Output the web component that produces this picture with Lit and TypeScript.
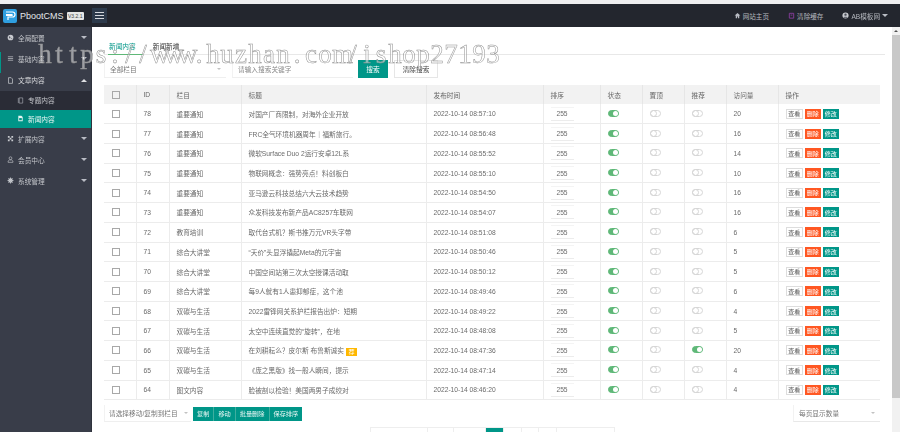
import { LitElement, html, css, svg } from "lit";
import { customElement } from "lit/decorators.js";

type Row = [number, string, string, string, number, boolean];

const rows: Row[] = [
  [78, "重要通知", "对国产厂商限制，对海外企业开放", "08:57:10", 20, false],
  [77, "重要通知", "FRC全气环境机器周年｜福斯旅行。", "08:56:48", 16, false],
  [76, "重要通知", "微软Surface Duo 2运行安卓12L系", "08:55:52", 14, false],
  [75, "重要通知", "物联网概念：强势亮点！料创板白", "08:55:10", 10, false],
  [74, "重要通知", "亚马逊云科技总结六大云技术趋势", "08:54:50", 16, false],
  [73, "重要通知", "众发科技发布新产品AC8257车联网", "08:54:07", 16, false],
  [72, "教育培训", "取代台式机？斯书推万元VR头字带", "08:51:08", 6, false],
  [71, "综合大讲堂", "“天价”头显浮撬起Meta的元宇宙", "08:50:46", 5, false],
  [70, "综合大讲堂", "中国空间站第三次太空授课活动取", "08:50:12", 5, false],
  [69, "综合大讲堂", "每9人就有1人患抑郁症，这个池", "08:49:46", 6, false],
  [68, "双碳与生活", "2022雷锋网关系护栏报告出炉：短期", "08:49:22", 4, false],
  [67, "双碳与生活", "太空中连续直觉的“旋转”，在地", "08:48:08", 5, false],
  [66, "双碳与生活", "在刘耕耘么？皮尔斯 布鲁斯诚实", "08:47:36", 20, true],
  [65, "双碳与生活", "《庞之黑版》找一般人瞬间，提示", "08:47:14", 4, false],
  [64, "图文内容", "脸被剖以检验！美国两男子成绞对", "08:46:20", 4, false],
];

const watermark = "https://www.huzhan.com/ishop27193";

const icon = (d: unknown) => html`<svg class="ic" viewBox="0 0 16 16">${d}</svg>`;
const icons = {
  globe: svg`<circle cx="8" cy="8" r="6.5" fill="#c9cbd0"/><path d="M4 5l3 1 1 3-2 1zM10 9l2 0-1 3z" fill="#393d49"/>`,
  list: svg`<path d="M2 4h12M2 8h12M2 12h12" stroke="#c9cbd0" stroke-width="1.5"/>`,
  doc: svg`<path d="M3.5 1.5h6l3 3v10h-9z" fill="none" stroke="#d8dadd" stroke-width="1.5"/>`,
  sub: svg`<path d="M3 2v12M5 2h8v12H5z" fill="none" stroke="#b8bbc2" stroke-width="1.3"/>`,
  news: svg`<path d="M3 1.5h7l3 3v10H3z" fill="#e6f5f2"/><path d="M5 7h6v5H5z" fill="#009688"/>`,
  ext: svg`<path d="M2 2h4v4H2zM10 2h4v4h-4zM2 10h4v4H2zM10 10h4v4h-4zM6 6h4v4H6z" fill="#c9cbd0"/>`,
  user: svg`<circle cx="8" cy="5" r="3.2" fill="none" stroke="#c9cbd0" stroke-width="1.4"/><path d="M2.5 14.5v-3l3-2.5h5l3 2.5v3z" fill="none" stroke="#c9cbd0" stroke-width="1.4"/>`,
  gear: svg`<circle cx="8" cy="8" r="5" fill="#c9cbd0"/><circle cx="8" cy="8" r="2" fill="#393d49"/><path d="M8 1v14M1 8h14M3 3l10 10M13 3L3 13" stroke="#c9cbd0" stroke-width="1.6"/>`,
  home: svg`<path d="M8 2L1.5 8H4v6h3v-4h2v4h3V8h2.500z" fill="#b9bcc4"/>`,
  trash: svg`<path d="M3 3h10v11H3z" fill="none" stroke="#8a3fa0" stroke-width="2"/><path d="M6 7h4" stroke="#8a3fa0" stroke-width="2"/>`,
  avatar: svg`<circle cx="8" cy="8" r="7" fill="#c9cbd0"/><circle cx="8" cy="6" r="2.700" fill="#4a4e5a"/><path d="M3 13c1-3 9-3 10 0z" fill="#4a4e5a"/>`,
};

@customElement("app-root")
export class AppRoot extends LitElement {
  static styles = css`
    :host { display: block; width: 900px; height: 432px; overflow: hidden; position: relative; background: #fff;
      font-family: "Liberation Sans", "Noto Sans CJK SC", sans-serif; font-size: 6.7px; color: #6a6a6a; }
    .frame { display: grid; grid-template-rows: 4px 23px 405px; width: 900px; height: 432px; filter: blur(0.4px); }
    .strip { background: #eeeef0; }
    .top { background: #23262e; display: flex; align-items: center; color: #c4c6cb; }
    .logo { display: flex; align-items: center; width: 92px; gap: 3px; padding-left: 3px; box-sizing: border-box; }
    .mark { width: 14px; height: 14px; border-radius: 2px; background: #2f9fe0; display: block; flex: none; }
    .brand { font-size: 9px; color: #e4e6ea; white-space: nowrap; }
    .ver { font-size: 5px; background: #e6e6e6; color: #444; padding: 1px 1.500px; border-radius: 1px; white-space: nowrap; }
    .burger { width: 15px; height: 15px; background: #2d3a4b; display: flex; align-items: center; justify-content: center; }
    .burger svg { width: 9px; height: 9px; display: block; }
    .links { margin-left: auto; display: flex; align-items: center; gap: 19px; padding-right: 12px; font-size: 6.600px; }
    .link { display: flex; align-items: center; gap: 2px; white-space: nowrap; color: #b5b8bf; }
    .ic { width: 7px; height: 7px; flex: none; display: block; }
    .caret { width: 0; height: 0; border: 3px solid transparent; border-top-color: #b9bcc4; border-bottom-width: 0; }
    .body { display: grid; grid-template-columns: 92px 800px 8px; min-height: 0; }
    .side { background: #393d49; color: #c2c4c9; border-right: 1px solid #2f323c; box-sizing: border-box; position: relative; }
    .mark-bar { position: absolute; left: 0; top: 25px; width: 1px; height: 21px; background: #009688; }
    .item { height: 21px; display: flex; align-items: center; padding: 0 4px 0 7px; gap: 4px; }
    .item .name { flex: 1; }
    .item .up { border-top-width: 0; border-top-color: transparent; border-bottom: 3px solid #dfe0e3; }
    .item.open { height: 22px; color: #dcdde0; }
    .sub { height: 18.500px; display: flex; align-items: center; gap: 4px; padding-left: 17px; background: #2a2c36; }
    .sub.on { background: #009688; color: #e8f6f4; }
    .main { padding: 0 12px; overflow: hidden; min-width: 0; position: relative; }
    .tabs { height: 28px; border-bottom: 1px solid #e8e8e8; margin-right: -5px; box-sizing: border-box; display: flex; align-items: flex-end; gap: 5px; }
    .tab { height: 13px; color: #333; padding: 0 5px; }
    .tab.on { color: #009688; border-bottom: 1px solid #5fb878; margin: 0 0 -1px 4px; padding: 0 7px 0 1px; }
    .filter { display: flex; align-items: flex-start; height: 30px; padding-top: 5px; box-sizing: border-box; }
    .sel { height: 18px; border-bottom: 1px solid #efefef; border-left: 1px solid #f2f2f2; display: flex; align-items: center; justify-content: space-between; box-sizing: border-box; padding: 0 5px; color: #777; }
    .sel-arrow { width: 0; height: 0; border: 2.500px solid transparent; border-top-color: #c2c2c2; border-bottom-width: 0; }
    .cat { width: 122px; margin-right: 6px; }
    .kw { width: 121px; margin-right: 5px; color: #888; }
    .go { width: 30px; height: 18px; background: #009688; color: #fff; display: flex; align-items: center; justify-content: center; margin-right: 6px; }
    .clr { width: 44px; height: 18px; border: 1px solid #e6e6e6; box-sizing: border-box; color: #444; display: flex; align-items: center; justify-content: center; }
    table { border-collapse: collapse; table-layout: fixed; width: 776px; }
    th { height: 19px; background: #f2f2f2; font-weight: 400; text-align: left; padding: 0 0 0 7px; box-sizing: border-box; border-right: 1px solid #e6e6e6; color: #666; }
    td { height: 19.730px; padding: 0 0 0 7px; box-sizing: border-box; border-right: 1px solid #ececec; border-bottom: 1px solid #ececec; white-space: nowrap; overflow: hidden; }
    th:last-child, td:last-child { border-right: none; }
    td.c, th.c { padding-left: 8px; }
    .box { width: 6px; height: 6px; border: 1px solid #a8a8a8; display: block; }
    .num { width: 23px; height: 14px; border-bottom: 1px solid #ececec; border-top: 1px solid #f4f4f4; display: flex; align-items: center; justify-content: center; box-sizing: border-box; }
    .sw { width: 9px; height: 5px; border-radius: 3.500px; border: 1px solid #d6d6d6; background: #fff; position: relative; display: block; box-sizing: content-box; margin-top: -1px; }
    .sw::after { content: ""; position: absolute; left: -1px; top: -1px; width: 7px; height: 7px; border-radius: 50%; border: 1px solid #d6d6d6; box-sizing: border-box; }
    .sw.on { background: #5fb878; border-color: #5fb878; }
    .sw.on::after { left: auto; right: 0; top: 0; width: 5px; height: 5px; background: #fff; border: none; }
    .ops { display: flex; gap: 1.500px; }
    .btn { width: 16.500px; height: 10px; display: flex; align-items: center; justify-content: center; font-size: 6px; box-sizing: border-box; }
    td:last-child { padding-left: 7.500px; }
    .view { border: 1px solid #ddd; color: #555; background: #fff; }
    .del { background: #ff5722; color: #fff; margin-left: 0.500px; }
    .edit { background: #009688; color: #fff; }
    .hot { display: inline-block; background: #ffb800; color: #fff; font-size: 6px; line-height: 8px; padding: 0 2.500px; margin-left: 2px; vertical-align: middle; }
    .foot { display: flex; align-items: center; margin-top: 5px; height: 17px; }
    .move { width: 87px; height: 17px; margin-right: 2px; padding: 0 3px 0 4px; }
    .batch { display: flex; height: 14px; background: #009688; color: #e8f6f4; font-size: 6.200px; }
    .batch span { display: flex; align-items: center; padding: 0 4px; border-right: 1px solid #3fae9f; white-space: nowrap; }
    .batch span:last-child { border-right: none; }
    .size { margin-left: auto; width: 87px; height: 17px; padding: 0 5px; border-bottom: 1px solid #e8e8e8; }
    .pages { display: flex; position: absolute; left: 278px; top: 400px; height: 14px; border: 1px solid #eee; box-sizing: border-box; width: 245px; }
    .pages span { padding-top: 3px; border-right: 1px solid #eee; color: #666; white-space: nowrap; text-align: center; box-sizing: border-box; }
    .pages .p-total { width: 57px; }
    .pages .p-first { width: 26px; }
    .pages .p-prev { width: 32px; }
    .pages .p-num { width: 17.500px; }
    .pages .p-next { width: 29px; border-right: none; }
    .pages .p-last { width: 28px; border-right: none; }
    .pages .cur { background: #009688; color: #fff; width: 18px; }
    .bar { background: #f1f1f1; display: flex; flex-direction: column; }
    .bar .up { height: 8px; background: #f1f1f1; display: flex; align-items: center; justify-content: center; }
    .bar .up i { width: 0; height: 0; border: 2px solid transparent; border-bottom-color: #505050; border-top-width: 0; }
    .bar .thumb { height: 363px; background: #c8c8c8; }
    .wm { position: absolute; left: 38px; top: 38px; display: flex; font-family: "Liberation Serif", serif; font-size: 27px; line-height: 32px; color: rgba(255,255,255,0.5); -webkit-text-stroke: 0.5px #8f8f8f; white-space: nowrap; pointer-events: none; }
    .wm span { width: 14px; text-align: center; flex: none; }
  `;

  render() {
    return html`
      <div class="frame">
        <div class="strip"></div>
        <header class="top">
          <div class="logo">
            <svg class="mark" viewBox="0 0 14 14"><path d="M3 3h6.500a2.500 2.500 0 010 5H5v3M3 5.500h6a.8.800 0 010 1H3" fill="none" stroke="#fff" stroke-width="1.200"/></svg>
            <span class="brand">PbootCMS</span><span class="ver">V3.2.1</span>
          </div>
          <div class="burger"><svg viewBox="0 0 9 9"><path d="M0 1.500h9M0 4.500h9M0 7.500h9" stroke="#d5d8de" stroke-width="1.200"/></svg></div>
          <div class="links">
            <span class="link">${icon(icons.home)}网站主页</span>
            <span class="link">${icon(icons.trash)}清除缓存</span>
            <span class="link">${icon(icons.avatar)}AB模板网<i class="caret"></i></span>
          </div>
        </header>
        <div class="body">
          <nav class="side">
            <i class="mark-bar"></i>
            <div class="item">${icon(icons.globe)}<span class="name">全局配置</span><i class="caret"></i></div>
            <div class="item">${icon(icons.list)}<span class="name">基础内容</span><i class="caret"></i></div>
            <div class="item open">${icon(icons.doc)}<span class="name">文章内容</span><i class="caret up"></i></div>
            <div class="sub">${icon(icons.sub)}专题内容</div>
            <div class="sub on">${icon(icons.news)}新闻内容</div>
            <div class="item">${icon(icons.ext)}<span class="name">扩展内容</span><i class="caret"></i></div>
            <div class="item">${icon(icons.user)}<span class="name">会员中心</span><i class="caret"></i></div>
            <div class="item">${icon(icons.gear)}<span class="name">系统管理</span><i class="caret"></i></div>
          </nav>
          <main class="main">
            <div class="tabs"><span class="tab on">新闻内容</span><span class="tab">新闻新增</span></div>
            <div class="filter">
              <div class="sel cat">全部栏目<i class="sel-arrow"></i></div>
              <div class="sel kw">请输入搜索关键字</div>
              <div class="go">搜索</div>
              <div class="clr">清除搜索</div>
            </div>
            <table>
              <colgroup>
                <col style="width:32px" /><col style="width:33px" /><col style="width:72px" /><col style="width:185px" />
                <col style="width:117px" /><col style="width:57px" /><col style="width:42px" /><col style="width:42px" />
                <col style="width:42px" /><col style="width:52px" /><col style="width:102px" />
              </colgroup>
              <thead><tr>
                <th class="c"><i class="box"></i></th><th>ID</th><th>栏目</th><th>标题</th><th>发布时间</th><th>排序</th>
                <th>状态</th><th>置顶</th><th>推荐</th><th>访问量</th><th>操作</th>
              </tr></thead>
              <tbody>
                ${rows.map((r) => html`<tr>
                  <td class="c"><i class="box"></i></td>
                  <td>${r[0]}</td>
                  <td>${r[1]}</td>
                  <td>${r[2]}${r[0] === 66 ? html`<span class="hot">荐</span>` : ""}</td>
                  <td>2022-10-14 ${r[3]}</td>
                  <td><span class="num">255</span></td>
                  <td><i class="sw on"></i></td>
                  <td><i class="sw"></i></td>
                  <td><i class="sw ${r[5] ? "on" : ""}"></i></td>
                  <td>${r[4]}</td>
                  <td><div class="ops"><span class="btn view">查看</span><span class="btn del">删除</span><span class="btn edit">修改</span></div></td>
                </tr>`)}
              </tbody>
            </table>
            <div class="foot">
              <div class="sel move">请选择移动/复制到栏目<i class="sel-arrow"></i></div>
              <div class="batch"><span>复制</span><span>移动</span><span>批量删除</span><span>保存排序</span></div>
              <div class="sel size">每页显示数量<i class="sel-arrow"></i></div>
            </div>
            <div class="pages">
              <span class="p-total">共15条 当前1/2页</span><span class="p-first">首页</span><span class="p-prev">上一页</span><span class="cur">1</span><span class="p-num">2</span><span class="p-num">3</span><span class="p-num">4</span><span class="p-next">下一页</span><span class="p-last">尾页</span>
            </div>
          </main>
          <div class="bar"><div class="up"><i></i></div><div class="thumb"></div></div>
        </div>
      </div>
      <div class="wm">${[...watermark].map((c) => html`<span>${c}</span>`)}</div>
    `;
  }
}
